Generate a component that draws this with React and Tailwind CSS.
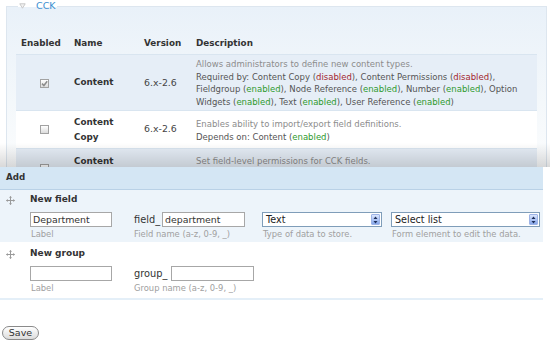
function Status({ on }) {
  return on ? (
    <span className="text-[#2e9a2e]">enabled</span>
  ) : (
    <span className="text-[#a3262f]">disabled</span>
  )
}

function Checkbox({ checked }) {
  return (
    <span className="inline-flex h-[9px] w-[9px] items-center justify-center border border-[#a2a2a2] bg-gradient-to-b from-white to-[#dcdcdc]">
      {checked && (
        <svg width="7" height="7" viewBox="0 0 7 7">
          <path d="M1 3.6 L2.9 5.5 L6.2 1.2" stroke="#8c8c8c" strokeWidth="1.5" fill="none" />
        </svg>
      )}
    </span>
  )
}

function DragHandle() {
  return (
    <svg width="9" height="9" viewBox="0 0 9 9" className="shrink-0">
      <path d="M4.5 0.5 V8.5 M0.5 4.5 H8.5" stroke="#9a9a9a" strokeWidth="1" />
      <path d="M4.5 0 L3 1.8 H6 Z M4.5 9 L3 7.2 H6 Z M0 4.5 L1.8 3 V6 Z M9 4.5 L7.2 3 V6 Z" fill="#9a9a9a" />
    </svg>
  )
}

function TextInput({ value, className }) {
  return (
    <div className={`flex h-[15px] items-center border border-[#a7a7a7] bg-white pl-[2px] text-[9.4px] leading-none text-[#333] ${className}`}>
      {value}
    </div>
  )
}

function Select({ value, className }) {
  return (
    <div className={`flex h-[15px] items-center border border-[#7f9db9] bg-white pl-[3px] text-[9.6px] leading-none text-[#222] ${className}`}>
      <span className="flex-1">{value}</span>
      <span className="m-px flex h-[11px] w-[9px] items-center justify-center rounded-[1px] border border-[#9db3e6] bg-gradient-to-b from-[#dbe6fd] to-[#86a6ea]">
        <svg width="5" height="8" viewBox="0 0 5 8">
          <path d="M2.5 0.5 L4.5 3 H0.5 Z M2.5 7.5 L4.5 5 H0.5 Z" fill="#1d2d57" />
        </svg>
      </span>
    </div>
  )
}

function Hint({ children }) {
  return <div className="mt-[2px] text-[8.4px] leading-[10px] text-[#a0a0a0]">{children}</div>
}

export default function App() {
  return (
    <div className="h-[342px] w-[550px] overflow-hidden bg-white font-['DejaVu_Sans',sans-serif] text-[#333]">
      {/* module list, partly covered */}
      <div className="relative h-[167px] overflow-hidden">
        <fieldset className="ml-[6px] h-[200px] w-[541px] border border-[#dde6ef] bg-gradient-to-b from-[#e9f1f9] via-[#f4f8fb] to-white pl-[9px]">
          <legend className="ml-[2px] flex h-[12px] items-center gap-[10px] px-[1px]">
            <svg width="7" height="6" viewBox="0 0 7 6">
              <path d="M0.8 0.8 H6.2 L3.5 5.2 Z" fill="#f2f2f2" stroke="#c4c4c4" strokeWidth="0.9" />
            </svg>
            <span className="text-[9.5px] leading-none text-[#3b8fd1]">CCK</span>
          </legend>

          <div className="mt-[22px] w-[521px]">
            <div className="grid h-[20px] grid-cols-[53px_70px_52px_1fr] items-center text-[8.8px] font-bold text-[#333]">
              <div className="pl-[5px]">Enabled</div>
              <div className="pl-[5px]">Name</div>
              <div className="pl-[5px]">Version</div>
              <div className="pl-[5px]">Description</div>
            </div>

            <div className="grid grid-cols-[53px_70px_52px_1fr] items-center border-y border-[#d9e5f0] bg-[#e6eef7] pb-[2px] pt-[3px]">
              <div className="flex justify-center pl-[4px]"><Checkbox checked /></div>
              <div className="pl-[5px] text-[8.8px] font-bold">Content</div>
              <div className="pl-[5px] text-[9.4px] text-[#444]">6.x-2.6</div>
              <div className="whitespace-nowrap pl-[5px] text-[8.5px] leading-[12.5px] text-[#555]">
                <div className="text-[#8c8c8c]">Allows administrators to define new content types.</div>
                <div>Required by: Content Copy (<Status />), Content Permissions (<Status />),</div>
                <div>Fieldgroup (<Status on />), Node Reference (<Status on />), Number (<Status on />), Option</div>
                <div>Widgets (<Status on />), Text (<Status on />), User Reference (<Status on />)</div>
              </div>
            </div>

            <div className="grid h-[37px] grid-cols-[53px_70px_52px_1fr] items-center bg-white">
              <div className="flex justify-center pl-[4px]"><Checkbox /></div>
              <div className="pl-[5px] text-[8.8px] font-bold leading-[15px]">Content<br />Copy</div>
              <div className="pl-[5px] text-[9.4px] text-[#444]">6.x-2.6</div>
              <div className="whitespace-nowrap pl-[5px] pt-[2px] text-[8.5px] leading-[12.5px] text-[#555]">
                <div className="text-[#8c8c8c]">Enables ability to import/export field definitions.</div>
                <div>Depends on: Content (<Status on />)</div>
              </div>
            </div>

            <div className="grid h-[37px] grid-cols-[53px_70px_52px_1fr] items-start border-t border-[#d9e5f0] bg-[#e6eef7] pt-[5px]">
              <div className="flex justify-center pl-[4px] pt-[10px]"><Checkbox /></div>
              <div className="pl-[5px] text-[8.8px] font-bold leading-[15px]">Content</div>
              <div className="pl-[5px] pt-[11px] text-[9.4px] text-[#444]">6.x-2.6</div>
              <div className="whitespace-nowrap pl-[5px] pt-[1px] text-[8.5px] leading-[12.5px] text-[#8c8c8c]">
                Set field-level permissions for CCK fields.
              </div>
            </div>
          </div>
        </fieldset>
        <div className="pointer-events-none absolute inset-x-0 bottom-0 h-[24px] bg-gradient-to-b from-transparent to-black/15" />
      </div>

      {/* add field / group form */}
      <div className="w-[543px]">
        <div className="flex h-[23px] items-center border-b border-[#b9d1e6] bg-[#d4e6f4] pl-[6px] text-[8.7px] font-bold text-[#333]">
          Add
        </div>

        <div className="bg-[#edf4fa] pb-[3px] pt-[3px]">
          <div className="flex h-[14px] items-center">
            <div className="flex w-[30px] justify-center pr-[10px]"><DragHandle /></div>
            <span className="text-[9px] font-bold">New field</span>
          </div>
          <div className="mt-[5px] flex pl-[30px]">
            <div className="w-[104px]">
              <TextInput value="Department" className="w-[82px]" />
              <Hint><span className="pl-px">Label</span></Hint>
            </div>
            <div className="w-[128px]">
              <div className="flex items-center gap-[2px]">
                <span className="w-[26px] text-[9.8px] leading-none">field_</span>
                <TextInput value="department" className="w-[83px]" />
              </div>
              <Hint>Field name (a-z, 0-9, _)</Hint>
            </div>
            <div className="w-[129px]">
              <Select value="Text" className="w-[120px]" />
              <Hint><span className="pl-px">Type of data to store.</span></Hint>
            </div>
            <div>
              <Select value="Select list" className="w-[149px]" />
              <Hint><span className="pl-px">Form element to edit the data.</span></Hint>
            </div>
          </div>
        </div>

        <div className="border-b-2 border-[#e4eff8] bg-white pb-[5px] pt-[5px]">
          <div className="flex h-[14px] items-center">
            <div className="flex w-[30px] justify-center pr-[10px]"><DragHandle /></div>
            <span className="text-[9px] font-bold">New group</span>
          </div>
          <div className="mt-[5px] flex pl-[30px]">
            <div className="w-[104px]">
              <TextInput value="" className="w-[82px]" />
              <Hint><span className="pl-px">Label</span></Hint>
            </div>
            <div>
              <div className="flex items-center gap-[2px]">
                <span className="w-[35px] text-[9.8px] leading-none">group_</span>
                <TextInput value="" className="w-[83px]" />
              </div>
              <Hint>Group name (a-z, 0-9, _)</Hint>
            </div>
          </div>
        </div>
      </div>

      <div className="ml-[2px] mt-[26px]">
        <button className="flex h-[14px] w-[37px] items-center justify-center rounded-full border border-[#8a8a8a] bg-gradient-to-b from-white to-[#dcdcdc] text-[9.5px] leading-none text-[#333]">
          Save
        </button>
      </div>
    </div>
  )
}
